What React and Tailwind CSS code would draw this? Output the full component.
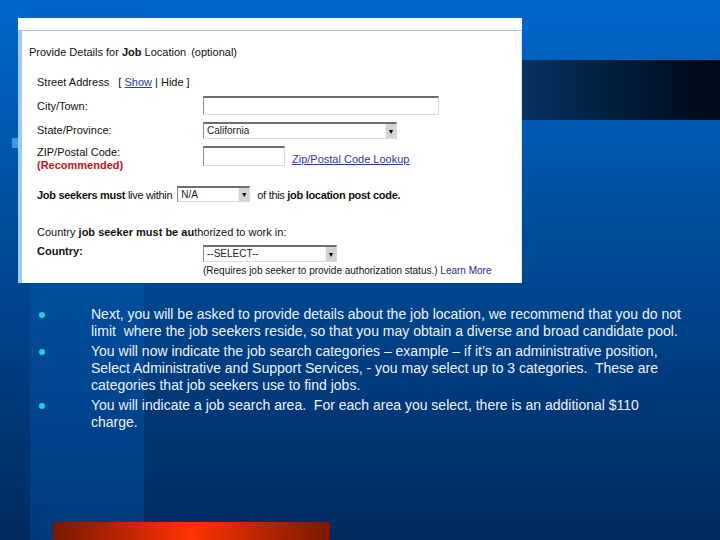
const Inset = ({ className = '', children }) => (
  <div
    className={`flex items-center bg-white border-t-2 border-l border-r border-b border-t-[#6d6d6d] border-l-[#8a8a8a] border-r-[#d8d8d8] border-b-[#d8d8d8] ${className}`}
  >
    {children}
  </div>
);

const Select = ({ className = '', value }) => (
  <Inset className={className}>
    <span className="flex-1 pl-[3px] text-[10px] leading-none text-[#222]">{value}</span>
    <span className="w-[11px] h-full flex items-center justify-center bg-[#d6d3cc] border-l border-[#f4f4f4] text-[7px] leading-none text-black">
      ▼
    </span>
  </Inset>
);

const FormShot = () => (
  <div className="ml-[18px] w-[504px] h-[265px] bg-white flex flex-col font-['Liberation_Sans',Arial,sans-serif] text-[11px] leading-[13px] text-[#111]">
    {/* top strip */}
    <div className="h-[13px] border-b border-[#a9c3de]" />
    <div className="flex-1 border-l-4 border-[#a3c8ee] border-r border-r-[#cfe8f5] flex flex-col">
      <div className="mt-[15px] pl-[7px] whitespace-nowrap">
        <span>Provide Details for </span>
        <span className="font-bold">Job</span>
        <span> Location</span>
        <span className="ml-[5px]">(optional)</span>
      </div>

      <div className="mt-[17px] pl-[15px] whitespace-nowrap">
        Street Address&nbsp;&nbsp;&nbsp;[ <span className="underline text-[#2342a8]">Show</span> | Hide ]
      </div>

      <div className="mt-[7px] pl-[15px] flex items-center h-[19px]">
        <span className="w-[166px] pt-[2px]">City/Town:</span>
        <Inset className="w-[236px] h-[19px]" />
      </div>

      <div className="mt-[7px] pl-[15px] flex items-center h-[17px]">
        <span className="w-[166px]">State/Province:</span>
        <Select className="w-[194px] h-[17px]" value="California" />
      </div>

      <div className="mt-[7px] pl-[15px] flex">
        <div className="w-[166px] flex flex-col">
          <span>ZIP/Postal Code:</span>
          <span className="font-bold text-[#c0141b]">(Recommended)</span>
        </div>
        <Inset className="w-[82px] h-[20px]" />
        <span className="ml-[7px] mt-[7px] underline text-[#2a3aa0] whitespace-nowrap">
          Zip/Postal Code Lookup
        </span>
      </div>

      <div className="mt-[14px] pl-[15px] flex items-center h-[16px] whitespace-nowrap tracking-[-0.3px]">
        <span className="mr-[5px] pt-[2px]">
          <span className="font-bold">Job seekers must</span> live within
        </span>
        <Select className="w-[73px] h-[16px] tracking-normal" value="N/A" />
        <span className="ml-[7px] pt-[2px]">
          of this <span className="font-bold">job location</span> <span className="font-bold">post code.</span>
        </span>
      </div>

      <div className="mt-[24px] pl-[15px] whitespace-nowrap">
        Country <span className="font-bold">job seeker must be au</span>thorized to work in:
      </div>

      <div className="mt-[6px] pl-[15px] flex items-start h-[17px]">
        <span className="w-[166px] font-bold">Country:</span>
        <Select className="w-[134px] h-[17px]" value="--SELECT--" />
      </div>

      <div className="mt-[2px] pl-[181px] text-[10px] whitespace-nowrap">
        (Requires job seeker to provide authorization status.){' '}
        <span className="text-[#1c2a8c]">Learn More</span>
      </div>
    </div>
  </div>
);

const bullets = [
  [
    'Next, you will be asked to provide details about the job location, we recommend that you do not',
    'limit  where the job seekers reside, so that you may obtain a diverse and broad candidate pool.',
  ],
  [
    'You will now indicate the job search categories \u2013 example \u2013 if it\u2019s an administrative position,',
    'Select Administrative and Support Services, - you may select up to 3 categories.  These are',
    'categories that job seekers use to find jobs.',
  ],
  [
    'You will indicate a job search area.  For each area you select, there is an additional $110',
    'charge.',
  ],
];

export default function App() {
  return (
    <div className="relative w-[720px] h-[540px] overflow-hidden bg-linear-to-b from-[#0068cc] to-[#002a5e]">
      {/* lighter vertical band */}
      <div className="absolute left-[30px] top-0 w-[114px] h-full bg-[#0060c0]/30" />
      {/* small square peeking from behind the form */}
      <div className="absolute left-[12px] top-[138px] w-[6px] h-[10px] bg-[#3a9ae8]" />

      <div className="relative flex flex-col h-full">
        <div className="flex pt-[18px]">
          <FormShot />
          <div className="flex-1 mt-[42px] h-[60px] bg-linear-to-r from-[#063262] to-[#000916]" />
        </div>

        <ul className="mt-[23px] flex flex-col gap-[3px] font-['Liberation_Sans',Arial,sans-serif] text-[14px] leading-[17px] text-[#eef2f7]">
          {bullets.map((lines, i) => (
            <li key={i} className="flex">
              <span className="w-[91px] shrink-0 flex justify-start pl-[39px] pt-[6px]">
                <span className="w-[6px] h-[6px] rounded-full bg-[#19d6d6]" />
              </span>
              <span className="whitespace-pre">
                {lines.map((l, j) => (
                  <span key={j} className="block">
                    {l}
                  </span>
                ))}
              </span>
            </li>
          ))}
        </ul>

        <div className="mt-auto ml-[53px] w-[277px] h-[18px] bg-linear-to-r from-[#7a1800] via-[#ff3300] to-[#7a1800]" />
      </div>
    </div>
  );
}
